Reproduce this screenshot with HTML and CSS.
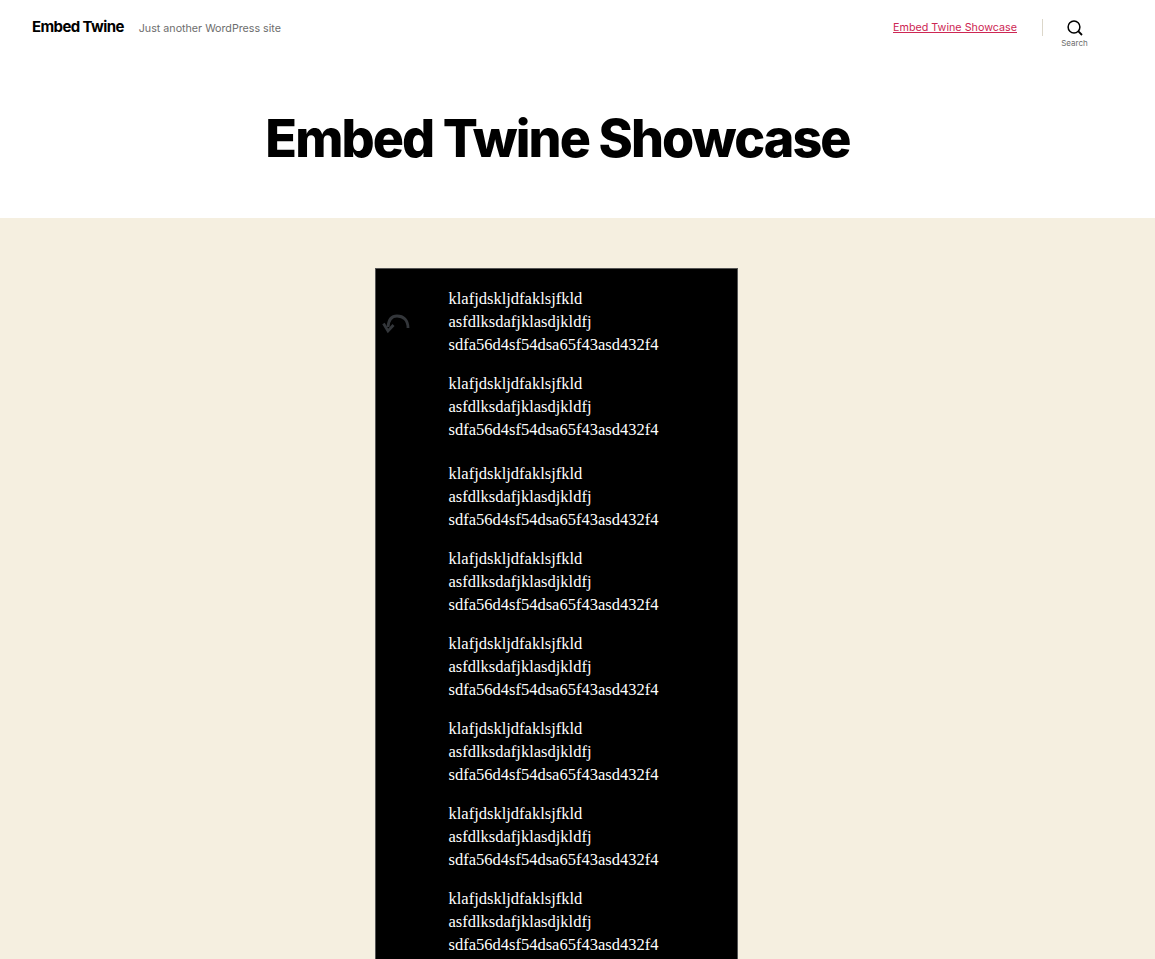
FILE: index.html
```html
<!DOCTYPE html>
<html lang="en">
<head>
    <meta charset="UTF-8">
    <meta name="viewport" content="width=device-width, initial-scale=1.0">
    <title>Embed Twine Showcase</title>
    <link rel="stylesheet" href="styles.css">
</head>
<body>
    <header class="site-header">
        <div class="site-brand">
            <a class="site-title" href="#">Embed Twine</a>
            <span class="site-tagline">Just another WordPress site</span>
        </div>
        <nav class="site-nav">
            <a class="nav-link" href="#">Embed Twine Showcase</a>
            <span class="nav-divider"></span>
            <button class="search-toggle" type="button">
                <svg class="search-icon" width="16" height="16" viewBox="0 0 16 16" fill="none" stroke="#000" stroke-width="1.5">
                    <circle cx="7" cy="7" r="5.9"/>
                    <path d="M11.2 11.2L15 15" stroke-width="1.8"/>
                </svg>
                <span class="search-label">Search</span>
            </button>
        </nav>
    </header>

    <section class="page-header">
        <h1>Embed Twine Showcase</h1>
    </section>

    <main class="page-content">
        <div class="story">
            <div class="story-undo">
                <svg width="30" height="24" viewBox="0 0 30 24" fill="none" stroke="#33363a" stroke-width="2.8">
                    <path d="M26 15C26 7 21.500 3 15 3C9.500 3 6.500 7 6 14"/>
                    <path d="M1.500 10.500L6 18L11.500 12"/>
                </svg>
            </div>
            <div class="story-text">
                <p>klafjdskljdfaklsjfkld<br>asfdlksdafjklasdjkldfj<br>sdfa56d4sf54dsa65f43asd432f4</p>
                <p class="gap-after">klafjdskljdfaklsjfkld<br>asfdlksdafjklasdjkldfj<br>sdfa56d4sf54dsa65f43asd432f4</p>
                <p>klafjdskljdfaklsjfkld<br>asfdlksdafjklasdjkldfj<br>sdfa56d4sf54dsa65f43asd432f4</p>
                <p>klafjdskljdfaklsjfkld<br>asfdlksdafjklasdjkldfj<br>sdfa56d4sf54dsa65f43asd432f4</p>
                <p>klafjdskljdfaklsjfkld<br>asfdlksdafjklasdjkldfj<br>sdfa56d4sf54dsa65f43asd432f4</p>
                <p>klafjdskljdfaklsjfkld<br>asfdlksdafjklasdjkldfj<br>sdfa56d4sf54dsa65f43asd432f4</p>
                <p>klafjdskljdfaklsjfkld<br>asfdlksdafjklasdjkldfj<br>sdfa56d4sf54dsa65f43asd432f4</p>
                <p>klafjdskljdfaklsjfkld<br>asfdlksdafjklasdjkldfj<br>sdfa56d4sf54dsa65f43asd432f4</p>
            </div>
        </div>
    </main>
</body>
</html>
```

FILE: styles.css
```css
html, body {
    height: 100%;
    overflow: hidden;
}
body {
    margin: 0;
    background-color: #fff;
    color: #000;
    font-family: Inter, "Liberation Sans", sans-serif;
}
a {
    color: inherit;
}
.site-header {
    display: flex;
    justify-content: space-between;
    align-items: flex-start;
    height: 55px;
    padding: 0 68px 0 32px;
}
.site-brand {
    display: flex;
    align-items: baseline;
    gap: 15px;
    padding-top: 17px;
}
.site-title {
    font-size: 15px;
    font-weight: 700;
    letter-spacing: -0.6px;
    text-decoration: none;
}
.site-tagline {
    font-size: 10.7px;
    color: #6d6d6d;
}
.site-nav {
    display: flex;
    align-items: flex-start;
}
.nav-link {
    margin-top: 21px;
    font-size: 10.75px;
    line-height: 14px;
    color: #cd2653;
}
.nav-divider {
    width: 1px;
    height: 17px;
    margin: 19px 19px 0 25px;
    background-color: #dcd7ca;
}
.search-toggle {
    display: flex;
    flex-direction: column;
    align-items: center;
    gap: 2px;
    width: 25px;
    margin: 20px 0 0 0;
    padding: 0;
    border: 0;
    background: none;
    font-family: inherit;
}
.search-icon {
    display: block;
}
.search-label {
    font-size: 8px;
    line-height: 10px;
    color: #6d6d6d;
}
.page-header {
    height: 163px;
    padding-right: 40px;
    text-align: center;
}
.page-header h1 {
    margin: 0;
    padding: 54px 0 0 0;
    font-size: 52px;
    line-height: 60px;
    font-weight: 800;
    letter-spacing: -1.9px;
}
.page-content {
    height: 100%;
    padding-top: 50px;
    background-color: #f5efe0;
}
.story {
    display: flex;
    width: 361px;
    margin-left: 375px;
    padding: 19.300px 0 30px 0;
    border: 1px solid #555;
    background-color: #000;
    color: #fff;
    font-family: "Liberation Serif", serif;
    font-size: 16.5px;
    line-height: 22.67px;
}
.story-undo {
    width: 72.500px;
    padding: 25px 0 0 5.500px;
    box-sizing: border-box;
}
.story-undo svg {
    display: block;
}
.story-text p {
    margin: 0 0 17px 0;
}
.story-text .gap-after {
    margin-bottom: 22px;
}
```
